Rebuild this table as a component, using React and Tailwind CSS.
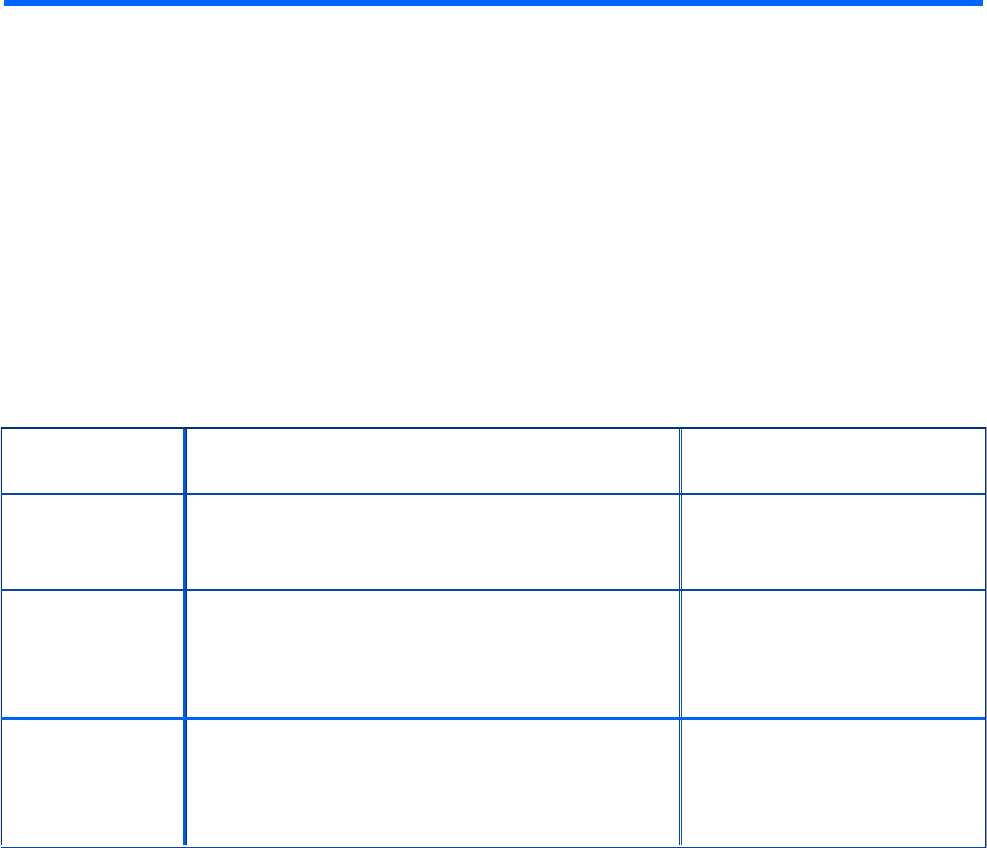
import React from 'react';

const rows = [
  { h: 'h-[66px]', top: 'border-t-2 border-t-[#00337f]' },
  { h: 'h-[96px]', top: 'border-t-2 border-t-[#0a45a8]' },
  { h: 'h-[128px]', top: 'border-t-2 border-t-[#0a45a8]' },
  { h: 'h-[128px]', top: 'border-t-[3px] border-t-[#0062f6]' },
];

const App = () => {
  return (
    <div className="w-[987px] h-[848px] bg-white overflow-hidden" style={{ fontFamily: '"Liberation Sans", Arial, sans-serif' }}>
      <div className="ml-[4px] w-[979px] h-[6px] bg-[#0066ff]"></div>

      <div className="mt-[421px] flex">
        <div className="w-[1px] h-[421px] bg-[#e9e9e9]"></div>
        <div className="w-[985px] border-r border-r-[#00338a] border-b border-b-[#0044c0]">
          {rows.map((row, i) => (
            <div key={i} className={`flex ${row.h} ${row.top}`}>
              <div className="w-[185px] border-l border-l-[#00337f] border-r-[3px] border-r-[#0058f0]"></div>
              <div className="w-[494px] border-l border-l-[#00308a] border-r border-r-[#0040b0]"></div>
              <div className="w-[1px]"></div>
              <div className="flex-1 border-l border-l-[#0050d0]"></div>
            </div>
          ))}
        </div>
        <div className="w-[1px] h-[421px] bg-[#a0a0a0]"></div>
      </div>
    </div>
  );
};

export default App;
